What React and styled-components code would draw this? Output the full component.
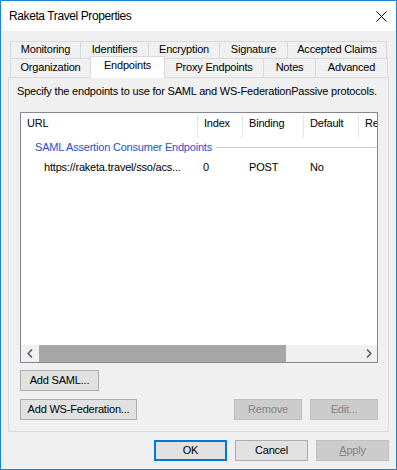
import React from 'react';
import styled, { createGlobalStyle } from 'styled-components';

const Global = createGlobalStyle`
  html, body { margin: 0; padding: 0; background: #fff; }
  body { font-family: "Liberation Sans", Arial, sans-serif; font-size: 11px; color: #000; }
  * { box-sizing: border-box; }
`;

const Window = styled.div`
  width: 397px;
  height: 470px;
  border: 1px solid #1883d7;
  background: #f0f0f0;
  display: flex;
  flex-direction: column;
`;

const TitleBar = styled.div`
  height: 30px;
  flex-shrink: 0;
  background: #fff;
  display: flex;
  align-items: center;
  padding: 0 9px 0 8px;
`;

const Title = styled.div`
  font-size: 12px;
  letter-spacing: -0.4px;
  line-height: 30px;
  flex: 1;
`;

const CloseIcon = styled.svg`
  width: 11px;
  height: 11px;
  display: block;
  margin-top: 1px;
`;

const Body = styled.div`
  flex: 1;
  display: flex;
  flex-direction: column;
  padding: 10px 7px 0 7px;
`;

const TabStrip = styled.div`
  margin-left: 2px;
  display: flex;
  flex-direction: column;
`;

const TabRow = styled.div`
  display: flex;
  align-items: flex-start;
  height: ${p => p.$h}px;
`;

const Tab = styled.div`
  flex-shrink: 0;
  width: ${p => p.$w}px;
  height: ${p => (p.$selected ? 22 : p.$h)}px;
  margin-top: ${p => (p.$selected ? -2 : 0)}px;
  margin-left: -1px;
  &:first-child { margin-left: 0; }
  border: 1px solid #d9d9d9;
  border-bottom: none;
  background: ${p => (p.$selected ? '#fff' : '#f0f0f0')};
  position: ${p => (p.$selected ? 'relative' : 'static')};
  z-index: ${p => (p.$selected ? 2 : 'auto')};
  text-align: center;
  line-height: ${p => p.$lh}px;
  letter-spacing: -0.2px;
  white-space: nowrap;
`;

const Panel = styled.div`
  height: 355px;
  border: 1px solid #d9d9d9;
  background: #f0f0f0;
  display: flex;
  flex-direction: column;
  padding: 0 10px 0 11px;
  flex-shrink: 0;
`;

const Description = styled.div`
  margin: 6px 0 0 -3px;
  line-height: 15px;
  letter-spacing: -0.2px;
  white-space: nowrap;
`;

const ListView = styled.div`
  margin-top: 13px;
  height: 251px;
  border: 1px solid #828790;
  background: #fff;
  display: flex;
  flex-direction: column;
  overflow: hidden;
`;

const HeaderRow = styled.div`
  display: flex;
  height: 25px;
  flex-shrink: 0;
`;

const HeaderCell = styled.div`
  flex: ${p => (p.$last ? '1 1 0' : `0 0 ${p.$w}px`)};
  min-width: 0;
  margin-top: 2px;
  height: 23px;
  padding: 1px 0 0 6px;
  line-height: 15px;
  border-right: ${p => (p.$last ? 'none' : '1px solid #e5e5e5')};
  letter-spacing: -0.2px;
  white-space: nowrap;
  overflow: hidden;
`;

const GroupHeader = styled.div`
  display: flex;
  align-items: center;
  height: 19px;
  padding-left: 14px;
  flex-shrink: 0;
`;

const GroupTitle = styled.span`
  color: #2a4fcc;
  line-height: 15px;
  letter-spacing: -0.2px;
  white-space: nowrap;
`;

const GroupLine = styled.div`
  flex: 1;
  height: 1px;
  margin-left: 4px;
  background: #bccde6;
`;

const DataRow = styled.div`
  display: flex;
  align-items: center;
  height: 20px;
  flex-shrink: 0;
`;

const DataCell = styled.div`
  flex-shrink: 0;
  width: ${p => p.$w}px;
  padding-left: ${p => p.$pad}px;
  line-height: 15px;
  letter-spacing: -0.2px;
  white-space: nowrap;
  overflow: hidden;
`;

const Filler = styled.div`
  flex: 1;
`;

const HScroll = styled.div`
  height: 17px;
  flex-shrink: 0;
  display: flex;
  background: #f0f0f0;
`;

const ScrollArrow = styled.div`
  width: 17px;
  flex-shrink: 0;
  display: flex;
  align-items: center;
  justify-content: center;
`;

const Track = styled.div`
  flex: 1;
  display: flex;
  padding-left: 1px;
`;

const Thumb = styled.div`
  height: 100%;
  background: #a6a6a6;
`;

const ButtonRow = styled.div`
  display: flex;
  gap: 8px;
  margin-top: ${p => p.$mt}px;
`;

const Gap = styled.div`
  flex: 1;
`;

const Button = styled.button`
  font-family: inherit;
  font-size: 11px;
  letter-spacing: -0.2px;
  width: ${p => p.$w}px;
  height: 21px;
  padding: 0;
  margin: 0;
  flex-shrink: 0;
  background: ${p => (p.$disabled ? '#cccccc' : '#e1e1e1')};
  border: ${p => (p.$default ? '2px solid #0078d7' : p.$disabled ? '1px solid #bfbfbf' : '1px solid #adadad')};
  color: ${p => (p.$disabled ? '#838383' : '#000')};
  line-height: 15px;
  white-space: nowrap;
`;

const Footer = styled.div`
  display: flex;
  justify-content: flex-end;
  gap: 8px;
  margin-top: 8px;
`;

const Mnemonic = styled.span`
  text-decoration: underline;
`;

const row1 = [
  ['Monitoring', 71],
  ['Identifiers', 69],
  ['Encryption', 72],
  ['Signature', 69],
  ['Accepted Claims', 100],
];
const row2 = [
  ['Organization', 81],
  ['Endpoints', 75, true],
  ['Proxy Endpoints', 100],
  ['Notes', 53],
  ['Advanced', 73],
];

const columns = [
  { name: 'URL', w: 177 },
  { name: 'Index', w: 45 },
  { name: 'Binding', w: 61 },
  { name: 'Default', w: 55 },
  { name: 'Re', w: 20, last: true },
];

const rowCells = [
  { text: 'https://raketa.travel/sso/acs...', w: 177, pad: 23 },
  { text: '0', w: 45, pad: 5 },
  { text: 'POST', w: 61, pad: 6 },
  { text: 'No', w: 55, pad: 6 },
];

export default function App() {
  return (
    <>
      <Global />
      <Window>
        <TitleBar>
          <Title>Raketa Travel Properties</Title>
          <CloseIcon viewBox="0 0 11 11">
            <path d="M0.5 0.5 L10.5 10.5 M10.5 0.5 L0.5 10.5" stroke="#000" strokeWidth="1" fill="none" />
          </CloseIcon>
        </TitleBar>
        <Body>
          <TabStrip>
            <TabRow $h={17}>
              {row1.map(([label, w]) => (
                <Tab key={label} $w={w} $h={17} $lh={15}>{label}</Tab>
              ))}
            </TabRow>
            <TabRow $h={19}>
              {row2.map(([label, w, sel]) => (
                <Tab key={label} $w={w} $h={19} $lh={17} $selected={sel}>{label}</Tab>
              ))}
            </TabRow>
          </TabStrip>
          <Panel>
            <Description>Specify the endpoints to use for SAML and WS-FederationPassive protocols.</Description>
            <ListView>
              <HeaderRow>
                {columns.map(c => (
                  <HeaderCell key={c.name} $w={c.w} $last={c.last}>{c.name}</HeaderCell>
                ))}
              </HeaderRow>
              <GroupHeader>
                <GroupTitle>SAML Assertion Consumer Endpoints</GroupTitle>
                <GroupLine />
              </GroupHeader>
              <DataRow>
                {rowCells.map((c, i) => (
                  <DataCell key={i} $w={c.w} $pad={c.pad}>{c.text}</DataCell>
                ))}
              </DataRow>
              <Filler />
              <HScroll>
                <ScrollArrow>
                  <svg width="6" height="9" viewBox="0 0 6 9">
                    <path d="M5 0.5 L1.2 4.5 L5 8.5" stroke="#606060" strokeWidth="1.6" fill="none" />
                  </svg>
                </ScrollArrow>
                <Track>
                  <Thumb style={{ width: 247 }} />
                </Track>
                <ScrollArrow>
                  <svg width="6" height="9" viewBox="0 0 6 9">
                    <path d="M1 0.5 L4.8 4.5 L1 8.5" stroke="#606060" strokeWidth="1.6" fill="none" />
                  </svg>
                </ScrollArrow>
              </HScroll>
            </ListView>
            <ButtonRow $mt={7}>
              <Button $w={79}>Add SAML...</Button>
            </ButtonRow>
            <ButtonRow $mt={8}>
              <Button $w={117}>Add WS-Federation...</Button>
              <Gap />
              <Button $w={68} $disabled>Remove</Button>
              <Button $w={68} $disabled>Edit...</Button>
            </ButtonRow>
          </Panel>
          <Footer>
            <Button $w={73} $default>OK</Button>
            <Button $w={73}>Cancel</Button>
            <Button $w={73} $disabled><Mnemonic>A</Mnemonic>pply</Button>
          </Footer>
        </Body>
      </Window>
    </>
  );
}
